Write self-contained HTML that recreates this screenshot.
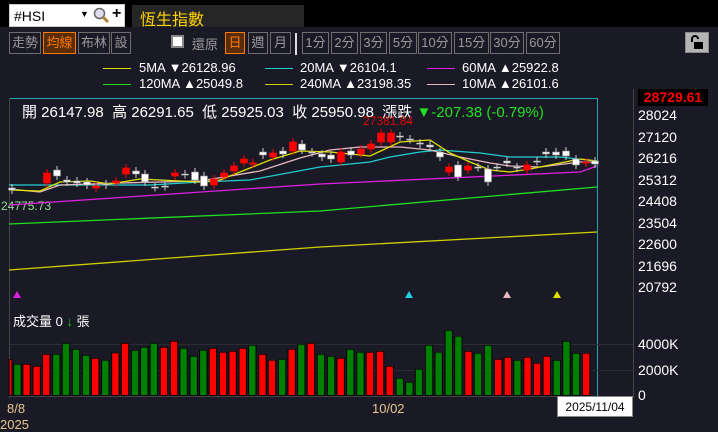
<!DOCTYPE html>
<html><head><meta charset="utf-8"><style>
*{margin:0;padding:0;box-sizing:border-box}
body{width:718px;height:429px;background:#1a1a26;position:relative;overflow:hidden;font-family:"Liberation Sans","Noto Sans CJK TC",sans-serif;color:#fff}
.a{position:absolute;white-space:nowrap}
.btn{position:absolute;top:32px;height:22px;border:1px solid #6e6e6e;color:#9a9a9a;font-size:13px;line-height:20px;text-align:center}
.leg{font-size:13px;line-height:14px;color:#fff}
.ln{position:absolute;height:1px;width:28px}
.ax{position:absolute;left:638px;font-size:14px;color:#fff}
</style></head><body>
<div class="a" style="left:0;top:0;width:718px;height:27px;background:#000"></div>
<div class="a" style="left:9px;top:4px;width:116px;height:23px;background:#fff;border:1px solid #ccc"></div>
<div class="a" style="left:14px;top:8px;font-size:14px;color:#000">#HSI</div>
<div class="a" style="left:80px;top:9px;font-size:9px;color:#000">▼</div>
<svg class="a" style="left:93px;top:7px" width="17" height="17"><circle cx="6.5" cy="6.5" r="5" fill="#dde" stroke="#666" stroke-width="1.5"/><path d="M10 10l5 5" stroke="#b08030" stroke-width="3"/></svg>
<div class="a" style="left:112px;top:5px;font-size:16px;font-weight:bold;color:#000">+</div>
<div class="a" style="left:132px;top:5px;width:172px;height:22px;background:#262626"></div>
<div class="a" style="left:140px;top:6px;font-size:16px;color:#ffd400">恆生指數</div>

<div class="btn" style="left:9px;width:32px">走勢</div>
<div class="btn" style="left:43px;width:33px;border-color:#ff7a00;background:#5a2c08;color:#ff7a00">均線</div>
<div class="btn" style="left:78px;width:32px">布林</div>
<div class="btn" style="left:111px;width:20px">設</div>
<div class="a" style="left:171px;top:35px;width:13px;height:13px;background:#fff;border:2px solid #888"></div>
<div class="a" style="left:192px;top:34px;font-size:13px;color:#9a9a9a">還原</div>
<div class="btn" style="left:225px;width:20px;border-color:#ff7a00;background:#5a2c08;color:#ff7a00">日</div>
<div class="btn" style="left:248px;width:20px">週</div>
<div class="btn" style="left:270px;width:21px">月</div>
<div class="a" style="left:295px;top:33px;width:2px;height:22px;background:#ddd"></div>
<div class="btn" style="left:302px;width:27px">1分</div>
<div class="btn" style="left:331px;width:27px">2分</div>
<div class="btn" style="left:360px;width:27px">3分</div>
<div class="btn" style="left:389px;width:28px">5分</div>
<div class="btn" style="left:418px;width:34px">10分</div>
<div class="btn" style="left:454px;width:35px">15分</div>
<div class="btn" style="left:490px;width:34px">30分</div>
<div class="btn" style="left:526px;width:34px">60分</div>
<div class="a" style="left:685px;top:32px;width:24px;height:21px;background:#b4b4b4;border:1px solid #888"></div>
<svg class="a" style="left:690px;top:35px" width="14" height="15"><path d="M2 7V4a3 3 0 0 1 6 0" stroke="#000" stroke-width="2" fill="none"/><rect x="4" y="7" width="9" height="7" fill="#000"/></svg>

<div class="ln" style="left:103px;top:68px;background:#e0e000"></div>
<div class="a leg" style="left:139px;top:61px">5MA ▼26128.96</div>
<div class="ln" style="left:265px;top:68px;background:#20d0d0"></div>
<div class="a leg" style="left:300px;top:61px">20MA ▼26104.1</div>
<div class="ln" style="left:427px;top:68px;background:#e020e0"></div>
<div class="a leg" style="left:462px;top:61px">60MA ▲25922.8</div>
<div class="ln" style="left:103px;top:84px;background:#20e020"></div>
<div class="a leg" style="left:139px;top:77px">120MA ▲25049.8</div>
<div class="ln" style="left:265px;top:84px;background:#d0d000"></div>
<div class="a leg" style="left:300px;top:77px">240MA ▲23198.35</div>
<div class="ln" style="left:427px;top:84px;background:#e8b8c0"></div>
<div class="a leg" style="left:462px;top:77px">10MA ▲26101.6</div>

<div class="a" style="left:9px;top:98px;width:588px;height:1px;background:#20a8a8"></div>
<div class="a" style="left:597px;top:98px;width:1px;height:298px;background:#20a8a8"></div>
<div class="a" style="left:9px;top:98px;width:1px;height:300px;background:#444"></div>
<div class="a" style="left:633px;top:89px;width:1px;height:309px;background:#444"></div>
<div class="a" style="left:10px;top:344px;width:623px;height:1px;background:#2c2c34"></div>
<div class="a" style="left:10px;top:370px;width:623px;height:1px;background:#2c2c34"></div>
<div class="a" style="left:10px;top:396px;width:623px;height:1px;background:#444"></div>

<div class="a" style="left:22px;top:101px;font-size:15px;color:#fff">開 26147.98&nbsp; 高 26291.65&nbsp; 低 25925.03&nbsp; 收 25950.98&nbsp; 漲跌 <span style="color:#20e020">▼-207.38 (-0.79%)</span></div>
<div class="a" style="left:363px;top:114px;font-size:12px;color:#e00000">27381.84</div>
<div class="a" style="left:1px;top:199px;font-size:12px;color:#90e090">24775.73</div>

<svg class="a" style="left:0;top:0" width="718" height="429">
<g fill="none" stroke-width="1.3">
<polyline stroke="#d0d000" points="9,270 320,247 597,232"/>
<polyline stroke="#20e020" points="9,224 320,211 597,187"/>
<polyline stroke="#e020e0" points="9,205 320,184 580,172 597,166"/>
<polyline stroke="#20d0d0" points="9,185 150,185 200,182 250,180 320,167 370,162 390,157 420,152 440,150 480,153 510,157 560,157 597,161"/>
<polyline stroke="#e8b8c0" points="9,189 40,192 60,185 120,183 200,181 260,171 300,158 330,150 360,147 400,147 430,150 460,157 490,163 510,166 540,167 580,162 597,162"/>
<polyline stroke="#e0e000" points="9,190 40,191 60,182 90,181 110,184 140,179 200,182 220,180 240,172 270,160 300,151 330,152 370,156 400,142 430,140 450,153 470,162 490,170 510,172 530,169 560,163 580,159 597,161"/>
</g>
<g id="c"></g>
<polygon points="17,291 13,298 21,298" fill="#e020e0"/>
<polygon points="409,291 405,298 413,298" fill="#20d0e0"/>
<polygon points="507,291 503,298 511,298" fill="#e8b8c0"/>
<polygon points="557,291 553,298 561,298" fill="#e0e000"/>
</svg>
<svg class="a" style="left:0;top:300px" width="718" height="129" viewBox="0 0 1568 387" preserveAspectRatio="none" id="v"></svg>

<div class="a" style="left:638px;top:89px;width:70px;height:17px;background:#000;color:#f00;font-weight:bold;font-size:14px;line-height:17px;text-align:center">28729.61</div>
<div class="ax" style="top:107px">28024</div>
<div class="ax" style="top:129px">27120</div>
<div class="ax" style="top:150px">26216</div>
<div class="ax" style="top:172px">25312</div>
<div class="ax" style="top:193px">24408</div>
<div class="ax" style="top:215px">23504</div>
<div class="ax" style="top:236px">22600</div>
<div class="ax" style="top:258px">21696</div>
<div class="ax" style="top:279px">20792</div>
<div class="ax" style="top:336px">4000K</div>
<div class="ax" style="top:362px">2000K</div>
<div class="ax" style="top:387px">0</div>
<div class="a" style="left:13px;top:311px;font-size:13px;color:#fff">成交量 0 <span style="color:#20c020">↓</span> 張</div>
<div class="a" style="left:7px;top:401px;font-size:13px;color:#e8c890">8/8</div>
<div class="a" style="left:0px;top:417px;font-size:13px;color:#e8c890">2025</div>
<div class="a" style="left:372px;top:401px;font-size:13px;color:#e8c890">10/02</div>
<div class="a" style="left:557px;top:396px;width:76px;height:21px;background:#fff;border:1px solid #888;color:#000;font-size:12px;line-height:20px;text-align:center">2025/11/04</div>
<script>
var V=[[20,'r',178],[30,'g',193],[50,'r',193],[72,'r',199],[93,'r',163],[115,'g',163],[136,'g',130],[158,'g',148],[180,'g',166],[200,'r',175],[222,'g',181],[244,'r',159],[265,'r',130],[287,'g',151],[307,'g',142],[328,'g',130],[350,'r',142],[372,'r',124],[393,'g',145],[415,'g',169],[436,'g',151],[457,'r',145],[479,'r',157],[500,'r',154],[522,'r',145],[543,'g',136],[565,'r',163],[586,'r',181],[608,'g',178],[629,'r',148],[650,'g',133],[671,'r',130],[693,'g',163],[715,'g',169],[736,'r',175],[757,'g',148],[779,'g',157],[800,'r',157],[822,'r',154],[843,'r',199],[865,'g',235],[886,'g',247],[907,'g',208],[929,'g',136],[950,'g',157],[972,'g',91],[993,'g',109],[1015,'r',154],[1036,'g',160],[1058,'g',136],[1080,'r',178],[1101,'r',172],[1122,'g',181],[1144,'r',172],[1165,'r',190],[1186,'r',169],[1208,'g',181],[1229,'g',124],[1250,'g',160],[1272,'r',160]];
var s='';V.forEach(function(b){var x=b[0]===20?20:b[0];var w=b[0]===20?6:16;s+='<rect x="'+x+'" y="'+b[2]+'" width="'+w+'" height="'+(286-b[2])+'" fill="'+(b[1]=='r'?'#f00':'#008000')+'" stroke="#000" stroke-width="2"/>';});
document.getElementById('v').innerHTML=s;
var C=[[12,'w',188,190],[47,'r',173,183],[57,'w',170,176],[67,'w',180,182],[77,'w',181,183],[87,'w',182,185],[96,'r',186,188],[106,'w',184,185],[116,'r',181,183],[126,'r',168,174],[136,'w',171,174],[145,'w',174,182],[155,'w',187,187.5],[165,'w',186,186.5],[175,'r',173,176],[185,'w',174,174.5],[195,'w',172,180],[204,'w',176,186],[214,'r',179,185],[224,'r',173,177],[234,'r',166,171],[244,'r',159,163],[253,'r',163,164],[263,'w',152,155],[273,'r',153,157],[283,'w',151,154],[293,'r',142,151],[302,'w',144,150],[312,'w',152,152.5],[322,'w',154,157],[331,'w',155,159],[341,'r',152,162],[351,'w',151,155],[361,'r',149,154],[371,'r',144,149],[381,'r',133,142],[391,'r',133,142],[400,'w',136,137],[410,'w',139,139.5],[420,'w',143,144],[430,'w',145,147],[440,'w',152,157],[449,'r',167,172],[458,'w',165,177],[468,'r',166,170],[478,'w',167,167.5],[488,'w',169,182],[497,'w',167,167.5],[507,'w',161,163],[517,'w',167,168],[527,'r',165,170],[537,'w',161,161.5],[546,'w',152,154],[556,'w',152,155],[566,'w',151,156],[576,'w',159,165],[586,'r',162,163],[595,'w',161,164]];
var t='';C.forEach(function(c){var col=c[1]=='r'?'#f00':'#fff';var h=Math.max(1.2,c[3]-c[2]);t+='<line x1="'+c[0]+'" x2="'+c[0]+'" y1="'+(c[2]-4)+'" y2="'+(c[3]+4)+'" stroke="'+(c[1]=='r'?'#f00':'#ccc')+'"/>';t+='<rect x="'+(c[0]-3.5)+'" y="'+c[2]+'" width="7" height="'+h+'" fill="'+col+'" stroke="'+(c[1]=='r'?'#f00':'#888')+'" stroke-width="0.6"/>';});
document.getElementById('c').innerHTML=t;
</script>
</body></html>
